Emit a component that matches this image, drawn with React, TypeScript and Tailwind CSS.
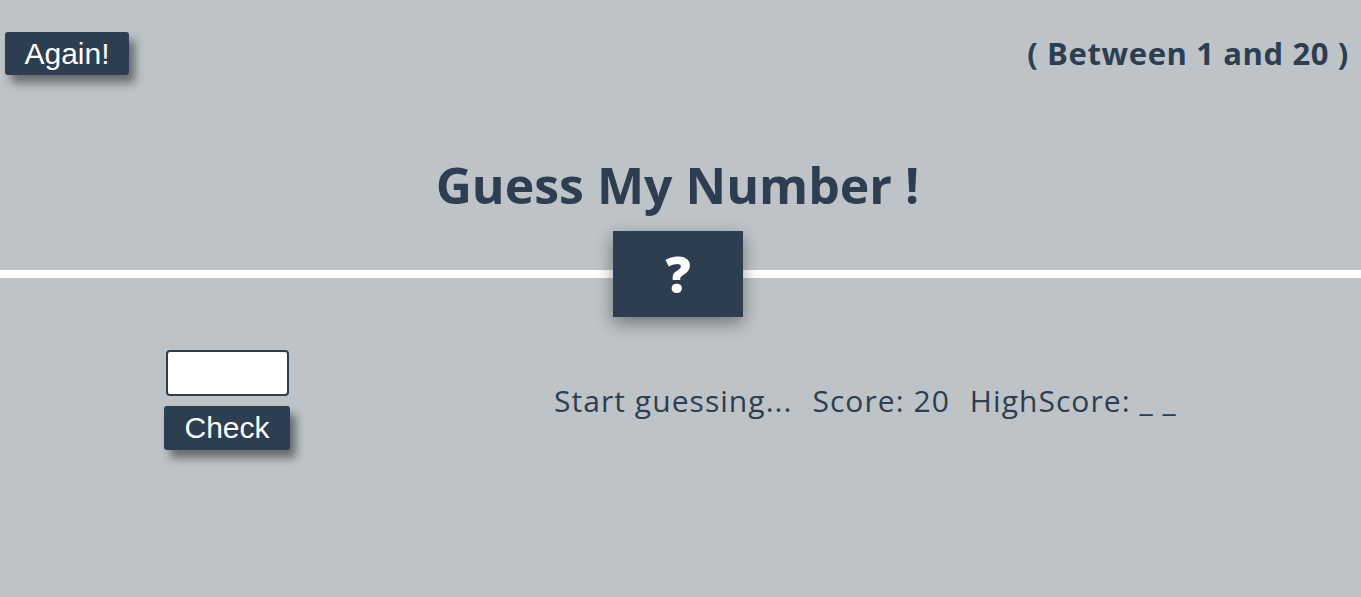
const headingFont = { fontFamily: '"Open Sans", "Liberation Sans", sans-serif' };

export default function App() {
  return (
    <div className="min-h-[597px] bg-[#bdc3c7] text-[#2c3e50]" style={headingFont}>
      <header className="flex items-start justify-between pl-[5px] pr-[12px] pt-[32px]">
        <button className="h-[43px] w-[124px] rounded-[3px] bg-[#2c3e50] font-['Liberation_Sans',Arial,sans-serif] text-[30px] leading-none text-white shadow-[6px_8px_10px_rgba(0,0,0,0.45)]">
          Again!
        </button>
        <p className="text-[31px] font-bold leading-[42px] tracking-[0.02em]">( Between 1 and 20 )</p>
      </header>

      <h1 className="mt-[80px] pr-[6px] text-center text-[50px] font-bold leading-[60px]">Guess My Number !</h1>

      <div className="mt-[16px] flex items-center">
        <div className="h-[8px] w-[613px] shrink-0 bg-white" />
        <div className="relative z-10 flex h-[86px] w-[130px] items-center justify-center bg-[#2c3e50] text-[50px] font-extrabold text-white shadow-[0_6px_16px_rgba(0,0,0,0.4)]">
          ?
        </div>
        <div className="h-[8px] flex-1 bg-white" />
      </div>

      <main className="mt-[33px] flex items-center">
        <div className="ml-[164px] flex w-[126px] flex-col items-center gap-[10px]">
          <input className="h-[46px] w-[123px] rounded-[4px] border-2 border-[#2c3e50] bg-white" />
          <button className="h-[44px] w-[126px] rounded-[3px] bg-[#2c3e50] font-['Liberation_Sans',Arial,sans-serif] text-[30px] leading-none text-white shadow-[6px_8px_10px_rgba(0,0,0,0.45)]">
            Check
          </button>
        </div>
        <div className="ml-[264px] flex gap-[20px] text-[30px] tracking-[0.035em]">
          <span>Start guessing...</span>
          <span>Score: 20</span>
          <span>HighScore: _ _</span>
        </div>
      </main>
    </div>
  );
}
